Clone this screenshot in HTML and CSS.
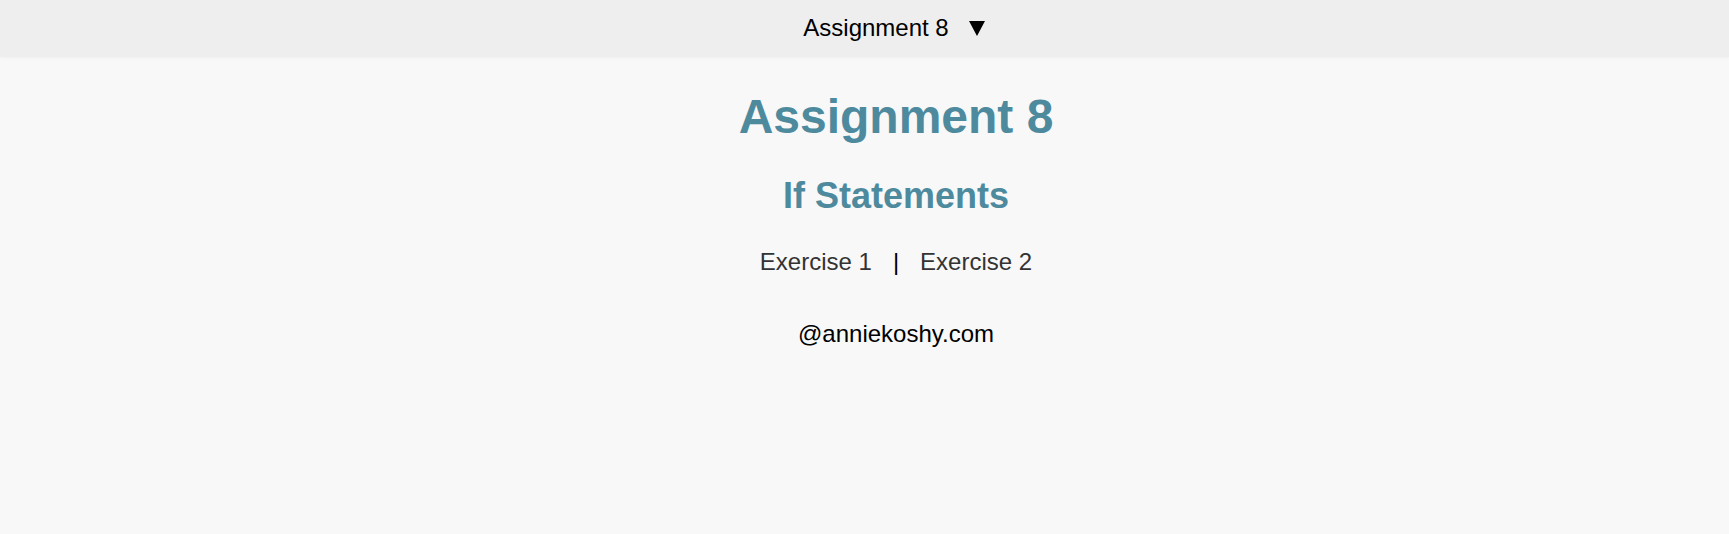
FILE: index.html
```html
<!DOCTYPE html>
<html lang="en">
<head>
<meta charset="utf-8">
<title>Assignment 8</title>
<link rel="stylesheet" href="styles.css">
</head>
<body>
<header class="topbar">
  <div class="topbar-inner">
    <span class="topbar-title">Assignment 8</span>
    <svg class="topbar-caret" width="16" height="15" viewBox="0 0 16 15" aria-hidden="true"><polygon points="0,0 16,0 8,15" fill="#000"/></svg>
  </div>
</header>
<main class="content">
  <h1 class="title">Assignment 8</h1>
  <h2 class="subtitle">If Statements</h2>
  <nav class="exercises">
    <a class="exercise-link" href="#">Exercise 1</a>
    <span class="sep">|</span>
    <a class="exercise-link" href="#">Exercise 2</a>
  </nav>
  <footer class="footer">@anniekoshy.com</footer>
</main>
</body>
</html>
```

FILE: styles.css
```css
html, body {
  margin: 0;
  padding: 0;
}
body {
  background: #f8f8f8;
  font-family: "Liberation Sans", Arial, sans-serif;
  color: #000;
  height: 534px;
  overflow: hidden;
}
.topbar {
  background: #eeeeee;
  height: 57px;
  box-shadow: 0 1px 3px rgba(0,0,0,0.04);
}
.topbar-inner {
  padding: 14px 0 0 59px;
  display: flex;
  justify-content: center;
  align-items: center;
  font-size: 24px;
  line-height: 28px;
}
.topbar-caret {
  margin-left: 20px;
  display: block;
}
.content {
  padding-left: 63px;
  display: flex;
  flex-direction: column;
  align-items: center;
}
.title {
  margin: 32px 0 0;
  font-size: 48px;
  font-weight: bold;
  color: #4e8a9e;
  line-height: 55px;
}
.subtitle {
  margin: 31px 0 0;
  font-size: 36px;
  font-weight: bold;
  color: #4e8a9e;
  line-height: 41px;
}
.exercises {
  margin-top: 32px;
  display: flex;
  align-items: baseline;
  gap: 21px;
  font-size: 24px;
  line-height: 28px;
}
.exercise-link {
  color: #333333;
  text-decoration: none;
}
.sep {
  color: #000;
}
.footer {
  margin-top: 44px;
  font-size: 24px;
  line-height: 28px;
  color: #000;
}
```
